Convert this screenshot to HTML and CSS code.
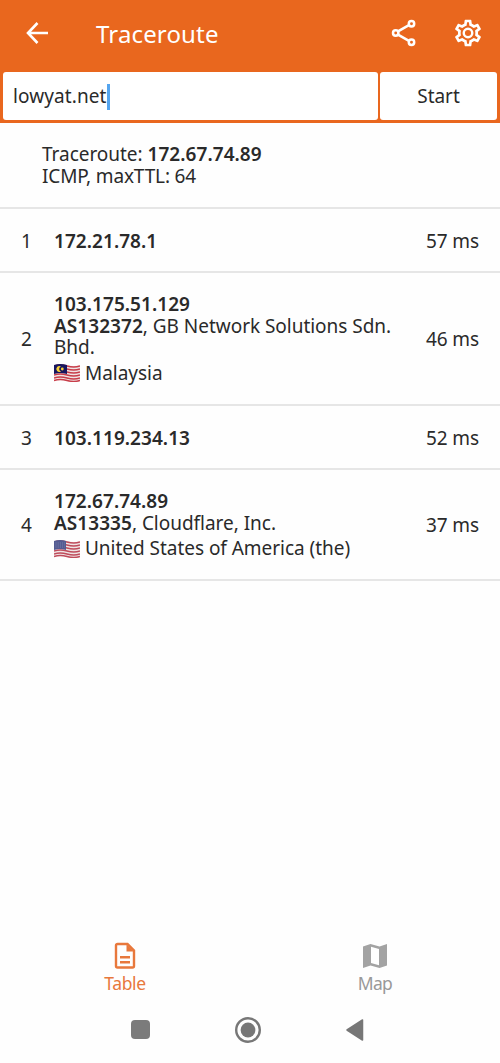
FILE: index.html
```html
<!DOCTYPE html>
<html lang="en">
<head>
<meta charset="utf-8">
<title>Traceroute</title>
<link rel="stylesheet" href="styles.css">
</head>
<body>
<header class="top">
  <div class="appbar">
    <svg class="back" width="24" height="24" viewBox="0 0 24 24"><path d="M23 12H3.500M12.500 2L3 12l9.500 10" fill="none" stroke="#fff" stroke-width="2.600"/></svg>
    <h1 class="title">Traceroute</h1>
    <svg class="share" width="26" height="28" viewBox="0 0 26 28" fill="none" stroke="#fff" stroke-width="2.500"><path d="M7 12.400l10.500-6M7 15.600l10.500 6"/><circle cx="4.700" cy="14" r="2.700"/><circle cx="20.500" cy="4.700" r="2.700"/><circle cx="20.500" cy="23.300" r="2.700"/></svg>
    <svg class="gear" width="32" height="32" viewBox="0 0 24 24" fill="#fff"><path d="M19.430 12.980c.04-.32.07-.64.07-.98s-.03-.66-.07-.98l2.110-1.650c.19-.15.24-.42.12-.64l-2-3.460c-.12-.22-.39-.3-.61-.22l-2.490 1c-.52-.4-1.080-.73-1.690-.98l-.38-2.650C14.460 2.180 14.250 2 14 2h-4c-.25 0-.46.18-.49.42l-.38 2.650c-.61.25-1.170.59-1.690.98l-2.490-1c-.23-.09-.49 0-.61.22l-2 3.460c-.13.22-.07.49.12.64l2.110 1.650c-.04.32-.07.65-.07.98s.03.66.07.98l-2.110 1.650c-.19.15-.24.42-.12.64l2 3.460c.12.22.39.3.61.22l2.490-1c.52.4 1.080.73 1.690.98l.38 2.650c.03.24.24.42.49.42h4c.25 0 .46-.18.49-.42l.38-2.650c.61-.25 1.170-.59 1.690-.98l2.490 1c.23.09.49 0 .61-.22l2-3.460c.12-.22.07-.49-.12-.64l-2.110-1.650zM17.450 11.270c.04.31.05.52.05.73s-.02.43-.05.73l-.14 1.130.89.700 1.080.84-.7 1.210-1.270-.51-1.040-.42-.9.680c-.43.32-.84.56-1.250.73l-1.060.43-.16 1.130-.2 1.350h-1.400l-.19-1.350-.16-1.130-1.060-.43c-.43-.18-.83-.41-1.230-.71l-.91-.7-1.060.43-1.270.51-.7-1.210 1.080-.84.89-.7-.14-1.130c-.03-.31-.05-.54-.05-.74s.02-.43.05-.73l.14-1.130-.89-.7-1.080-.84.7-1.210 1.270.51 1.040.42.9-.68c.43-.32.84-.56 1.250-.73l1.060-.43.16-1.130.2-1.350h1.390l.19 1.350.16 1.130 1.060.43c.43.18.83.41 1.230.71l.91.7 1.060-.43 1.270-.51.7 1.210-1.070.85-.89.700.14 1.130z"/><circle cx="12" cy="12" r="3.200" fill="none" stroke="#fff" stroke-width="1.800"/></svg>
  </div>
  <div class="search">
    <div class="field"><span class="host">lowyat.net</span><i class="caret"></i></div>
    <div class="start"><span class="start-text">Start</span></div>
  </div>
</header>
<main class="list">
  <section class="info">
    <div>Traceroute: <b>172.67.74.89</b></div>
    <div class="protocol">ICMP, maxTTL: 64</div>
  </section>
  <section class="hop"><span class="num">1</span><div class="detail"><b>172.21.78.1</b></div><span class="ms">57 ms</span></section>
  <section class="hop large"><span class="num">2</span><div class="detail">
    <div><b>103.175.51.129</b></div>
    <div class="org"><b>AS132372</b>, GB Network Solutions Sdn.<br>Bhd.</div>
    <div class="country"><svg class="flag" width="26" height="18" viewBox="0 0 26 18"><path d="M0 1Q6-1 13 1t13 0v16q-7 2-13 0T0 17z" fill="#efe4e5"/><path d="M0 2q6-2 13 0t13 0M0 5q6-2 13 0t13 0M0 8q6-2 13 0t13 0M0 11q6-2 13 0t13 0M0 14q6-2 13 0t13 0M0 16.500q6-2 13 0t13 0" fill="none" stroke="#c83d49" stroke-width="1.350"/><path d="M0 1Q6-1 13 1v9Q6 8 0 10z" fill="#17165f"/><path d="M7 2.500a3 3 0 1 0 0 5 2.600 2.600 0 0 1 0-5" fill="#f6cf36"/><circle cx="8.300" cy="5" r="1.400" fill="#f6cf36"/></svg><span>Malaysia</span></div>
  </div><span class="ms">46 ms</span></section>
  <section class="hop"><span class="num">3</span><div class="detail"><b>103.119.234.13</b></div><span class="ms">52 ms</span></section>
  <section class="hop medium"><span class="num">4</span><div class="detail">
    <div><b>172.67.74.89</b></div>
    <div class="org"><b>AS13335</b>, Cloudflare, Inc.</div>
    <div class="country"><svg class="flag" width="26" height="18" viewBox="0 0 26 18"><path d="M0 1Q6-1 13 1t13 0v16q-7 2-13 0T0 17z" fill="#efe4e5"/><path d="M0 2q6-2 13 0t13 0M0 5q6-2 13 0t13 0M0 8q6-2 13 0t13 0M0 11q6-2 13 0t13 0M0 14q6-2 13 0t13 0M0 16.500q6-2 13 0t13 0" fill="none" stroke="#bf4c5c" stroke-width="1.350"/><path d="M0 1Q6-1 12 1v9Q6 8 0 10z" fill="#535a91"/><path d="M1.500 3h9.500M1.500 5h9.500M1.500 7h9.500" stroke="#8c91b8" stroke-width=".7" stroke-dasharray="1 1.200"/></svg><span>United States of America (the)</span></div>
  </div><span class="ms">37 ms</span></section>
</main>
<nav class="tabs">
  <div class="tab active"><svg width="24" height="28" viewBox="0 0 24 28"><path d="M4.500 2h10L21 8.500V24a1.500 1.500 0 0 1-1.500 1.500h-15A1.500 1.500 0 0 1 3 24V3.500A1.500 1.500 0 0 1 4.500 2z" fill="none" stroke="#e8783c" stroke-width="2.400"/><path d="M13.500 2v7.500H21zM7 14h10v2.400H7zM7 19h10v2.400H7z" fill="#e8783c"/></svg><span>Table</span></div>
  <div class="tab map"><svg width="26" height="28" viewBox="0 0 26 28"><path d="M1 4.500L8.500 2l9 2.500L25 2v21.500L17.500 26l-9-2.500L1 26z" fill="#a3a3a3"/><path d="M9 4.700l8 2.200v16.400l-8-2.200z" fill="#fff"/></svg><span>Map</span></div>
</nav>
<footer class="system">
  <i class="square"></i>
  <svg class="home" width="28" height="28" viewBox="0 0 28 28"><circle cx="14" cy="14" r="11.800" fill="none" stroke="#777" stroke-width="2.400"/><circle cx="14" cy="14" r="7.400" fill="#777"/></svg>
  <svg class="tri" width="20" height="24" viewBox="0 0 20 24"><path d="M2 12L17.500 2v20z" fill="#777" stroke="#777" stroke-width="1.500" stroke-linejoin="round"/></svg>
</footer>
</body>
</html>
```
FILE: styles.css
```css
* { box-sizing: border-box; }
body {
  margin: 0;
  width: 500px;
  height: 1063px;
  display: flex;
  flex-direction: column;
  background: #fefefe;
  color: #2a2a2a;
  font: 19px/21.5px "Noto Sans", "Open Sans", sans-serif;
  letter-spacing: -0.03px;
  white-space: nowrap;
  overflow: hidden;
}
svg { display: block; flex: none; }
b { font-weight: 600; letter-spacing: 0.05px; }
.top { height: 123px; background: #e9671e; }
.appbar { height: 72px; display: flex; align-items: center; padding: 0 16px 6px 25px; }
.title { margin: 0 auto 0 47px; padding-top: 1px; color: #fff; font-size: 24px; font-weight: 400; letter-spacing: 0.15px; }
.share { margin-right: 35px; }
.search { display: flex; gap: 2px; padding: 0 3px; height: 48px; }
.field, .start { background: #fff; border-radius: 3px; display: flex; align-items: center; padding-top: 2px; }
.field { width: 375px; padding-left: 10px; }
.host { letter-spacing: 0.1px; }
.caret { width: 3px; height: 26px; background: #55a5ef; }
.start { flex: 1; justify-content: center; }
.info { height: 86px; padding: 21px 0 0 42px; border-bottom: 2px solid #e6e6e6; }
.protocol { letter-spacing: -0.15px; }
.hop { height: 64px; display: flex; align-items: center; padding-top: 3px; border-bottom: 2px solid #e6e6e6; }
.large { height: 133px; }
.medium { height: 111px; }
.num { width: 54px; padding-right: 1px; text-align: center; }
.detail { flex: 1; }
.large .detail, .medium .detail { padding-top: 2px; }
.country { display: flex; align-items: center; gap: 5px; height: 29px; }
.ms { padding-right: 21px; letter-spacing: -0.1px; }
.tabs { margin-top: auto; display: flex; height: 54px; }
.tab { flex: 1; display: flex; flex-direction: column; align-items: center; gap: 3px; color: #999; font-size: 17.500px; letter-spacing: -0.4px; }
.active { color: #e8783c; }
.map { letter-spacing: -0.7px; }
.system { height: 67px; display: flex; align-items: center; padding-left: 131px; }
.square { width: 19px; height: 19px; background: #7b7b7b; border-radius: 4px; }
.home { margin-left: 84px; }
.tri { margin-left: 83px; }
```
